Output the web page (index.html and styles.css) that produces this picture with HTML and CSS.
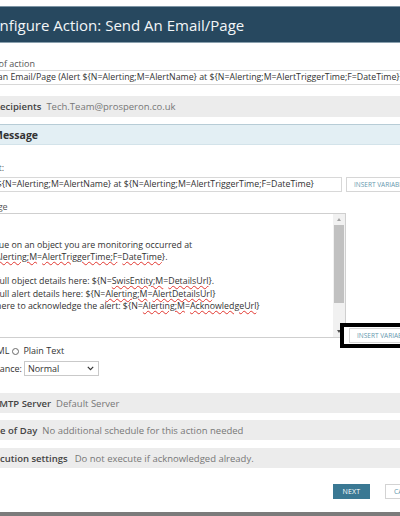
FILE: index.html
```html
<!DOCTYPE html>
<html lang="en">
<head>
<meta charset="utf-8">
<title>Configure Action: Send An Email/Page</title>
<link rel="stylesheet" href="styles.css">
</head>
<body>
<div class="dialog">
  <header class="titlebar">Configure Action: Send An Email/Page</header>

  <div class="content">
    <label class="field-label field-label--name">Name of action</label>
    <div class="input">Send an Email/Page (Alert ${N=Alerting;M=AlertName} at ${N=Alerting;M=AlertTriggerTime;F=DateTime})</div>
  </div>

  <div class="section-row section-row--recipients">
    <span class="row-label">Recipients</span>
    <span class="row-value">Tech.Team@prosperon.co.uk</span>
  </div>

  <div class="section-header">Message</div>

  <div class="content">
    <label class="field-label field-label--subject">Subject:</label>
    <div class="field-row">
      <div class="input input--subject">Alert ${N=Alerting;M=AlertName} at ${N=Alerting;M=AlertTriggerTime;F=DateTime}</div>
      <button class="btn-insert" type="button">INSERT VARIABLE</button>
    </div>

    <label class="field-label field-label--message">Message</label>
    <div class="message-row">
      <div class="textarea">
        <div class="textarea-text">
          <div class="line"></div>
          <div class="line"></div>
          <div class="line">An issue on an object you are monitoring occurred at</div>
          <div class="line">${N=<span class="sp">Alerting;M</span>=<span class="sp">AlertTriggerTime;F</span>=<span class="sp">DateTime</span>}.</div>
          <div class="line"></div>
          <div class="line">View full object details here: ${N=<span class="sp">SwisEntity;M</span>=<span class="sp">DetailsUrl</span>}.</div>
          <div class="line">View full alert details here: ${N=<span class="sp">Alerting;M</span>=<span class="sp">AlertDetailsUrl</span>}</div>
          <div class="line">Click here to acknowledge the alert: ${N=<span class="sp">Alerting;M</span>=<span class="sp">AcknowledgeUrl</span>}</div>
        </div>
        <div class="scrollbar">
          <span class="sb-btn"><span class="sb-up"></span></span>
          <span class="sb-thumb"></span>
          <span class="sb-track"></span>
          <span class="sb-btn"><span class="sb-down"></span></span>
        </div>
      </div>
      <span class="highlight"><button class="btn-insert" type="button">INSERT VARIABLE</button></span>
    </div>

    <div class="format-row">
      <span class="radio radio--checked"></span>
      <span class="radio-text">HTML</span>
      <span class="radio radio--second"></span>
      <span class="radio-text">Plain Text</span>
    </div>

    <div class="importance-row">
      <span class="importance-label">Importance:</span>
      <div class="select">
        <span>Normal</span>
        <svg class="chevron" width="7" height="5" viewBox="0 0 7 5"><path d="M0.8 0.9 L3.5 3.6 L6.2 0.9" fill="none" stroke="#333" stroke-width="1.2"/></svg>
      </div>
    </div>
  </div>

  <div class="section-row section-row--smtp">
    <span class="row-label">SMTP Server</span>
    <span class="row-value">Default Server</span>
  </div>
  <div class="section-row section-row--time">
    <span class="row-label">Time of Day</span>
    <span class="row-value">No additional schedule for this action needed</span>
  </div>
  <div class="section-row section-row--exec">
    <span class="row-label">Execution settings</span>
    <span class="row-value row-value--wide">Do not execute if acknowledged already.</span>
  </div>

  <div class="actions">
    <button class="btn-primary" type="button">NEXT</button>
    <button class="btn-secondary" type="button">CANCEL</button>
  </div>

  <div class="footer-bar"></div>
</div>
</body>
</html>
```

FILE: styles.css
```css
html, body {
  margin: 0;
  padding: 0;
}

body {
  width: 400px;
  height: 516px;
  overflow: hidden;
  background: #ffffff;
  font-family: "Open Sans", "Liberation Sans", sans-serif;
  color: #333333;
}

.dialog {
  width: 480px;
  margin-left: -40px;
  padding-top: 6px;
}

.titlebar {
  height: 37px;
  box-sizing: border-box;
  display: flex;
  align-items: center;
  padding-left: 21px;
  background: #27485f;
  border-top: 1px solid #7e95a5;
  border-bottom: 1px solid #8aa0ae;
  color: #f3f6f8;
  font-size: 15px;
  white-space: nowrap;
}

.content {
  padding: 0 11px;
}

.field-label {
  display: block;
  font-size: 9px;
  line-height: 12px;
  color: #555555;
  white-space: nowrap;
}

.field-label--name {
  margin-top: 15px;
}

.field-label--subject {
  margin-top: 17px;
  margin-bottom: 3px;
}

.field-label--message {
  margin-top: 9px;
}

.input {
  height: 15px;
  box-sizing: border-box;
  border: 1px solid #d8d8d8;
  padding: 0 3px;
  font-size: 8.8px;
  line-height: 13px;
  white-space: nowrap;
  overflow: hidden;
  color: #333333;
  background: #ffffff;
}

.input--subject {
  width: 371px;
  flex: none;
}

.field-row {
  display: flex;
  gap: 4px;
}

.btn-insert {
  height: 15px;
  box-sizing: border-box;
  border: 1px solid #d6d6d6;
  background: #ffffff;
  color: #6598ae;
  font-family: "Open Sans", "Liberation Sans", sans-serif;
  font-size: 6.5px;
  line-height: 13px;
  padding: 0 7px;
  white-space: nowrap;
  flex: none;
}

.section-row {
  display: flex;
  align-items: center;
  gap: 5px;
  height: 20px;
  background: #ececec;
  padding-left: 34px;
  font-size: 9.5px;
  white-space: nowrap;
}

.section-row--recipients {
  margin-top: 11px;
  height: 21px;
}

.section-row--smtp {
  margin-top: 17px;
}

.section-row--time {
  margin-top: 7px;
  padding-left: 23px;
}

.section-row--exec {
  margin-top: 8px;
  padding-left: 24px;
}

.row-label {
  font-weight: 600;
  color: #444444;
}

.row-value {
  color: #777777;
}

.row-value--wide {
  margin-left: 2px;
}

.section-header {
  margin-top: 7px;
  height: 21px;
  box-sizing: border-box;
  display: flex;
  align-items: center;
  padding-left: 33px;
  background: #e3eff4;
  border-top: 1px solid #b7ccd6;
  border-bottom: 1px solid #d3e3ea;
  font-size: 10.5px;
  font-weight: 700;
  color: #333333;
}

.message-row {
  display: flex;
  align-items: flex-end;
}

.textarea {
  width: 375px;
  height: 125px;
  box-sizing: border-box;
  border: 1px solid #cfcfcf;
  display: flex;
  flex: none;
  background: #ffffff;
}

.textarea-text {
  flex: 1;
  padding: 0 3px;
  overflow: hidden;
  font-size: 8.8px;
  line-height: 12.3px;
  color: #333333;
}

.line {
  height: 12.3px;
  white-space: nowrap;
}

.sp {
  text-decoration: underline wavy #e2362f;
  text-decoration-thickness: 0.8px;
  text-underline-offset: 1px;
}

.scrollbar {
  width: 12px;
  display: flex;
  flex-direction: column;
  background: #f1f1f1;
}

.sb-btn {
  height: 11px;
  display: flex;
  align-items: center;
  justify-content: center;
  flex: none;
}

.sb-up {
  width: 0;
  height: 0;
  border-left: 2.5px solid transparent;
  border-right: 2.5px solid transparent;
  border-bottom: 3px solid #a3a3a3;
}

.sb-down {
  width: 0;
  height: 0;
  border-left: 2.5px solid transparent;
  border-right: 2.5px solid transparent;
  border-top: 3px solid #505050;
}

.sb-thumb {
  height: 78px;
  margin: 0 1px;
  background: #c1c1c1;
  flex: none;
}

.sb-track {
  flex: 1;
}

.highlight {
  margin-left: -6px;
  margin-bottom: -10px;
  border: 4px solid #000000;
  padding: 1px 3px 1px 5px;
  background: #ffffff;
  display: flex;
  flex: none;
}

.format-row {
  margin-top: 6px;
  padding-left: 4px;
  display: flex;
  align-items: center;
  font-size: 9px;
  line-height: 14px;
  color: #333333;
  white-space: nowrap;
}

.radio {
  width: 7px;
  height: 7px;
  box-sizing: border-box;
  border: 1px solid #6a6a6a;
  border-radius: 50%;
  background: #ffffff;
  margin-right: 3px;
  flex: none;
}

.radio--checked {
  background: radial-gradient(circle, #333 0 1.5px, #fff 2px);
}

.radio--second {
  margin-left: 3px;
  margin-right: 4px;
}

.importance-row {
  margin-top: 3px;
  display: flex;
  align-items: center;
  gap: 2px;
  font-size: 9px;
  color: #333333;
}

.importance-label {
  white-space: nowrap;
}

.select {
  width: 75px;
  height: 15px;
  box-sizing: border-box;
  border: 1px solid #c9c9c9;
  display: flex;
  align-items: center;
  justify-content: space-between;
  padding: 0 4px 0 3px;
  background: #ffffff;
}

.chevron {
  display: block;
}

.actions {
  margin-top: 16px;
  padding-right: 11px;
  display: flex;
  justify-content: flex-end;
  gap: 15px;
}

.btn-primary {
  width: 37px;
  height: 15px;
  border: none;
  padding: 0;
  background: #3a7893;
  color: #ffffff;
  font-family: "Open Sans", "Liberation Sans", sans-serif;
  font-size: 7px;
  letter-spacing: 0.2px;
}

.btn-secondary {
  height: 15px;
  box-sizing: border-box;
  border: 1px solid #d3d3d3;
  padding: 0 8px;
  background: #ffffff;
  color: #6598ae;
  font-family: "Open Sans", "Liberation Sans", sans-serif;
  font-size: 7px;
}

.footer-bar {
  margin-top: 13px;
  height: 10px;
  background: #7b7b7b;
}
```
